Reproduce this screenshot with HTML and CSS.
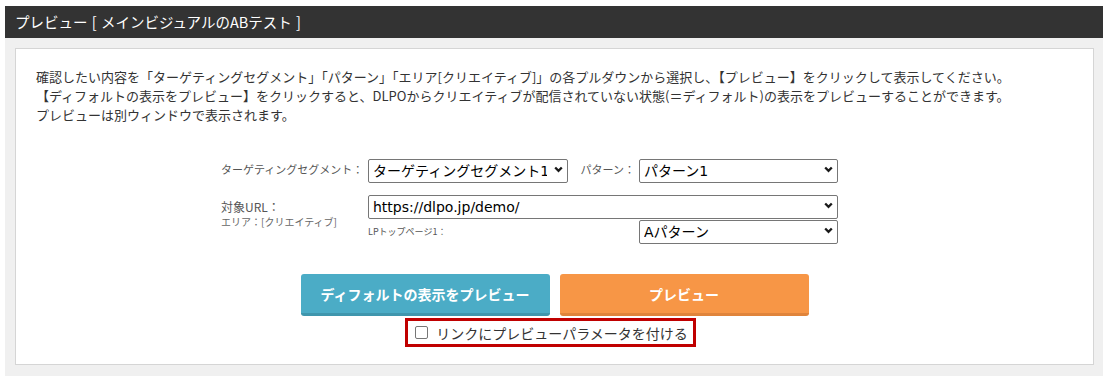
FILE: index.html
```html
<!DOCTYPE html>
<html lang="ja">
<head>
    <meta charset="UTF-8">
    <meta name="viewport" content="width=device-width, initial-scale=1.0">
    <title>プレビュー</title>
    <link rel="stylesheet" href="styles.css">
</head>
<body>
    <!-- プレビューパネル -->
    <div class="preview-panel">
        <h2 class="panel-title">プレビュー [ メインビジュアルのABテスト ]</h2>
        <div class="panel-body">
            <div class="panel-inner">
                <p class="intro">
                    確認したい内容を「ターゲティングセグメント」「パターン」「エリア[クリエイティブ]」の各プルダウンから選択し、【プレビュー】をクリックして表示してください。<br>
                    【ディフォルトの表示をプレビュー】をクリックすると、DLPOからクリエイティブが配信されていない状態(＝ディフォルト)の表示をプレビューすることができます。<br>
                    プレビューは別ウィンドウで表示されます。
                </p>

                <!-- 選択フォーム -->
                <div class="preview-form">
                    <label class="field-label segment-label">ターゲティングセグメント：</label>
                    <div class="select-wrap segment-select">
                        <select>
                            <option>ターゲティングセグメント1</option>
                        </select>
                        <svg class="chevron" viewBox="0 0 9 7"><path d="M1.2 1.5 L4.5 4.9 L7.8 1.5" fill="none" stroke="#1a1a1a" stroke-width="2.3"/></svg>
                    </div>
                    <label class="field-label pattern-label">パターン：</label>
                    <div class="select-wrap pattern-select">
                        <select>
                            <option>パターン1</option>
                        </select>
                        <svg class="chevron" viewBox="0 0 9 7"><path d="M1.2 1.5 L4.5 4.9 L7.8 1.5" fill="none" stroke="#1a1a1a" stroke-width="2.3"/></svg>
                    </div>

                    <div class="url-label">
                        <span class="url-main">対象URL：</span>
                        <span class="url-sub">エリア：[クリエイティブ]</span>
                    </div>
                    <div class="select-wrap url-select">
                        <select>
                            <option>https://dlpo.jp/demo/</option>
                        </select>
                        <svg class="chevron" viewBox="0 0 9 7"><path d="M1.2 1.5 L4.5 4.9 L7.8 1.5" fill="none" stroke="#1a1a1a" stroke-width="2.3"/></svg>
                    </div>
                    <span class="area-name">LPトップページ1：</span>
                    <div class="select-wrap area-select">
                        <select>
                            <option>Aパターン</option>
                        </select>
                        <svg class="chevron" viewBox="0 0 9 7"><path d="M1.2 1.5 L4.5 4.9 L7.8 1.5" fill="none" stroke="#1a1a1a" stroke-width="2.3"/></svg>
                    </div>
                </div>

                <!-- ボタン -->
                <div class="button-row">
                    <button class="btn btn-default">ディフォルトの表示をプレビュー</button>
                    <button class="btn btn-preview">プレビュー</button>
                </div>

                <div class="check-row">
                    <label class="param-check">
                        <input type="checkbox">
                        <span>リンクにプレビューパラメータを付ける</span>
                    </label>
                </div>
            </div>
        </div>
    </div>
</body>
</html>
```

FILE: styles.css
```css
/* 基本 */
* {
    margin: 0;
    padding: 0;
    box-sizing: border-box;
}

body {
    background-color: #fff;
    font-family: "Noto Sans CJK JP", sans-serif;
    color: #333;
}

/* パネル */
.preview-panel {
    margin: 6px 6px 0 5px;
}

.panel-title {
    height: 32px;
    padding-left: 10px;
    background-color: #333;
    color: #fff;
    font-size: 14.5px;
    font-weight: normal;
    line-height: 32px;
    word-spacing: 1px;
}

.panel-body {
    padding: 10px 9px 11px 10px;
    background-color: #f0f0f0;
}

.panel-inner {
    padding: 18px 20px 17px;
    background-color: #fff;
    border: 1px solid #d5d5d5;
}

.intro {
    font-size: 13px;
    line-height: 19px;
    color: #333;
}

/* フォーム */
.preview-form {
    display: grid;
    grid-template-columns: 147px 200px 71px 199px;
    grid-template-rows: 24px auto 25px;
    margin: 33px 0 0 185px;
}

.field-label {
    align-self: center;
    font-size: 11px;
    color: #555;
    white-space: nowrap;
}

.pattern-label {
    text-align: right;
    padding-right: 4px;
}

.url-label {
    grid-column: 1;
    grid-row: 2 / span 2;
    display: flex;
    flex-direction: column;
    padding-top: 18px;
    color: #555;
}

.url-main {
    font-size: 12px;
    line-height: 16px;
}

.url-sub {
    font-size: 10px;
    line-height: 14px;
    color: #666;
}

.url-select {
    grid-column: 2 / span 3;
    margin-top: 12px;
}

.area-name {
    grid-column: 2;
    align-self: center;
    padding-top: 3px;
    font-size: 9px;
    color: #555;
}

.area-select {
    grid-column: 4;
    margin-top: 1px;
}

.select-wrap {
    position: relative;
    height: 24px;
}

.select-wrap select {
    width: 100%;
    height: 100%;
    padding: 0 20px 0 4px;
    border: 1px solid #767676;
    border-radius: 2px;
    background-color: #fff;
    color: #000;
    font-family: "DejaVu Sans", "Noto Sans CJK JP", sans-serif;
    font-size: 14px;
    appearance: none;
    -webkit-appearance: none;
}

.chevron {
    position: absolute;
    top: 9px;
    right: 5px;
    width: 9px;
    height: 7px;
    pointer-events: none;
}

/* ボタン */
.button-row {
    display: flex;
    justify-content: center;
    gap: 10px;
    margin-top: 32px;
}

.btn {
    width: 249px;
    height: 42px;
    border: none;
    border-radius: 3px;
    color: #fff;
    font-family: "Noto Sans CJK JP", sans-serif;
    font-size: 14px;
    font-weight: bold;
    cursor: pointer;
}

.btn-default {
    background-color: #4bacc6;
    border-bottom: 3px solid #3f96ad;
}

.btn-preview {
    background-color: #f79646;
    border-bottom: 3px solid #e0843b;
}

/* チェックボックス */
.check-row {
    display: flex;
    justify-content: center;
    padding-right: 8px;
    margin-top: 2px;
}

.param-check {
    display: flex;
    align-items: center;
    gap: 8px;
    height: 29px;
    padding: 0 5px 0 7px;
    border: 3px solid #c00000;
    font-size: 14px;
    color: #333;
}

.param-check input {
    width: 13px;
    height: 13px;
    border: 1px solid #767676;
    border-radius: 2px;
    background-color: #fff;
    appearance: none;
    -webkit-appearance: none;
}
```
